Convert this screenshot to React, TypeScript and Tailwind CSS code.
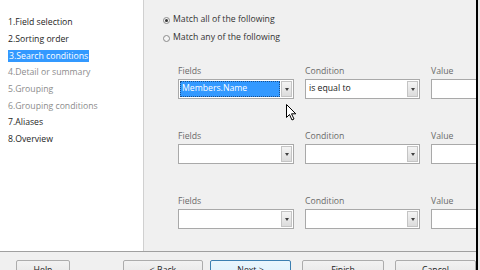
import React from 'react';

const steps = [
  { label: '1.Field selection', enabled: true },
  { label: '2.Sorting order', enabled: true },
  { label: '3.Search conditions', enabled: true, active: true },
  { label: '4.Detail or summary', enabled: false },
  { label: '5.Grouping', enabled: false },
  { label: '6.Grouping conditions', enabled: false },
  { label: '7.Aliases', enabled: true },
  { label: '8.Overview', enabled: true },
];

function DropButton() {
  return (
    <div className="w-[11px] my-[1px] mr-[1px] border border-[#c4c4c4] bg-gradient-to-b from-[#f4f4f4] to-[#dcdcdc] flex items-center justify-center">
      <svg width="4" height="3" viewBox="0 0 4 3">
        <path d="M0 0 L4 0 L2 3 Z" fill="#404040" />
      </svg>
    </div>
  );
}

function Combo({ value, focused, width }: { value?: string; focused?: boolean; width: string }) {
  return (
    <div className={`${width} h-[20px] border border-[#a9a9a9] bg-white flex`}>
      <div className="flex-1 flex p-[1px]">
        {focused ? (
          <div className="flex-1 bg-[#3399ff] outline outline-1 outline-dotted outline-[#1b4f8a] -outline-offset-1 flex items-center pl-[2px] text-white">
            {value}
          </div>
        ) : (
          <div className="flex-1 flex items-center pl-[2px] text-[#222]">{value}</div>
        )}
      </div>
      <DropButton />
    </div>
  );
}

function ConditionRow({ field, cond, focused }: { field?: string; cond?: string; focused?: boolean }) {
  return (
    <div className="flex gap-[11px]">
      <div className="flex flex-col gap-[2px]">
        <div className="h-[12px] leading-[12px] text-[#6a6a6a]">Fields</div>
        <Combo width="w-[116px]" value={field} focused={focused} />
      </div>
      <div className="flex flex-col gap-[2px]">
        <div className="h-[12px] leading-[12px] text-[#6a6a6a]">Condition</div>
        <Combo width="w-[115px]" value={cond} />
      </div>
      <div className="flex flex-col gap-[2px]">
        <div className="h-[12px] leading-[12px] text-[#6a6a6a]">Value</div>
        <div className="w-[60px] h-[20px] border border-[#a9a9a9] bg-white" />
      </div>
    </div>
  );
}

function Radio({ checked, label }: { checked?: boolean; label: string }) {
  return (
    <div className="h-[12px] flex items-center gap-[3px] text-[#333]">
      <div className="w-[7px] h-[7px] rounded-full border border-[#8a8a8a] bg-[#f4f4f4] flex items-center justify-center">
        {checked && <div className="w-[3px] h-[3px] rounded-full bg-[#333]" />}
      </div>
      <span>{label}</span>
    </div>
  );
}

function WizButton({ label, width, primary }: { label: string; width: string; primary?: boolean }) {
  return (
    <div
      className={`${width} h-[22px] rounded-[2px] border flex items-center justify-center ${
        primary
          ? 'border-[#3c7fb1] bg-gradient-to-b from-[#eaf6fd] to-[#d9f0fc]'
          : 'border-[#acacac] bg-gradient-to-b from-[#f2f2f2] to-[#e3e3e3]'
      } text-[#222]`}
    >
      {label}
    </div>
  );
}

export default function App() {
  return (
    <div
      className="w-[480px] h-[270px] overflow-hidden relative bg-[#f0f0f0] flex text-[8.7px]"
      style={{ fontFamily: '"Open Sans", "Noto Sans", sans-serif' }}
    >
      <div className="w-[476px] shrink-0 flex flex-col">
        <div className="h-[251px] shrink-0 flex">
          {/* steps */}
          <div className="w-[144px] shrink-0 bg-white border-r border-[#d0d0d0] pt-[14px] pl-[8px]">
            {steps.map((s) => (
              <div key={s.label} className="h-[16.75px] flex items-center">
                <span
                  className={
                    s.active
                      ? 'bg-[#3399ff] text-white h-[12px] leading-[12px] pl-[1px] pr-[1px]'
                      : s.enabled
                        ? 'text-[#1e1e1e]'
                        : 'text-[#8c8c8c]'
                  }
                >
                  {s.label}
                </span>
              </div>
            ))}
          </div>

          {/* search conditions */}
          <div className="flex-1 overflow-hidden pt-[14px] pl-[19px] flex flex-col">
            <div className="flex flex-col gap-[6px]">
              <Radio checked label="Match all of the following" />
              <Radio label="Match any of the following" />
            </div>
            <div className="pl-[15px] pt-[21px] flex flex-col gap-[31px]">
              <ConditionRow field="Members.Name" cond="is equal to" focused />
              <ConditionRow />
              <ConditionRow />
            </div>
          </div>
        </div>

        <div className="shrink-0 border-t border-[#a0a0a0] pt-[8px] pl-[16px] flex">
          <WizButton label="Help" width="w-[81px]" />
          <div className="ml-[53px]">
            <WizButton label="< Back" width="w-[80px]" />
          </div>
          <div className="ml-[7px]">
            <WizButton label="Next >" width="w-[81px]" primary />
          </div>
          <div className="ml-[11px]">
            <WizButton label="Finish" width="w-[82px]" />
          </div>
          <div className="ml-[11px]">
            <WizButton label="Cancel" width="w-[81px]" />
          </div>
        </div>
      </div>
      <div className="w-[2px] shrink-0 bg-black" />
      <div className="w-[2px] shrink-0 bg-[#e8e8e8]" />

      {/* mouse pointer */}
      <svg className="absolute left-[286px] top-[104px]" width="12" height="17" viewBox="0 0 12 17">
        <path d="M0.5 0.5 L0.5 13.5 L3.5 10.5 L6 16 L8 15 L5.5 9.8 L9.8 9.8 Z" fill="#fff" stroke="#000" strokeWidth="1" strokeLinejoin="round" />
      </svg>
    </div>
  );
}
